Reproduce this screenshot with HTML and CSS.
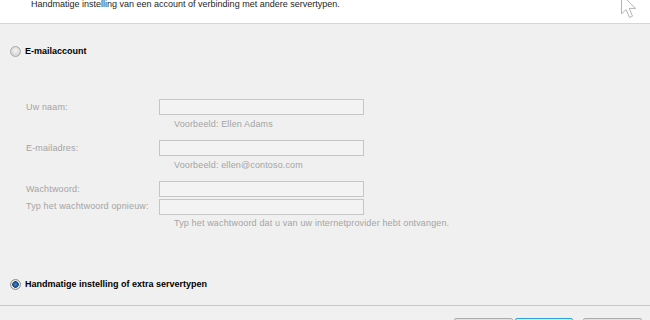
FILE: index.html
```html
<!DOCTYPE html>
<html lang="nl">
<head>
    <meta charset="UTF-8">
    <title>Account toevoegen</title>
    <link rel="stylesheet" href="styles.css">
</head>
<body>
    <div class="header">
        <p class="header-text">Handmatige instelling van een account of verbinding met andere servertypen.</p>
        <svg class="cursor" width="18" height="22" viewBox="0 0 18 22">
            <path d="M1.5 -5.5 L1.5 14 L6 9.5 L9.5 17.5 L12.5 16.2 L9.2 8.4 L15.5 8.4 Z" fill="#ffffff" stroke="#b4b4b4" stroke-width="1"/>
        </svg>
    </div>

    <div class="option first">
        <span class="radio"></span>
        <span class="option-label">E-mailaccount</span>
    </div>

    <div class="form">
        <label class="field-label">Uw naam:</label>
        <span class="field"></span>
        <span></span>
        <span class="hint">Voorbeeld: Ellen Adams</span>

        <label class="field-label">E-mailadres:</label>
        <span class="field"></span>
        <span></span>
        <span class="hint">Voorbeeld: ellen@contoso.com</span>

        <label class="field-label">Wachtwoord:</label>
        <span class="field"></span>
        <label class="field-label">Typ het wachtwoord opnieuw:</label>
        <span class="field tight"></span>
        <span></span>
        <span class="hint wide">Typ het wachtwoord dat u van uw internetprovider hebt ontvangen.</span>
    </div>

    <div class="option second">
        <span class="radio checked"></span>
        <span class="option-label">Handmatige instelling of extra servertypen</span>
    </div>

    <div class="footer">
        <button class="btn" aria-label="Vorige"></button>
        <button class="btn default" aria-label="Volgende"></button>
        <button class="btn cancel" aria-label="Annuleren"></button>
    </div>
</body>
</html>
```

FILE: styles.css
```css
body {
    margin: 0;
    padding: 0;
    background-color: #f0f0f0;
    font-family: "Liberation Sans", Arial, sans-serif;
    font-size: 9px;
    color: #000;
    overflow: hidden;
}
.header {
    position: relative;
    height: 23px;
    background-color: #ffffff;
    border-bottom: 1px solid #d6d6d6;
}
.header-text {
    margin: 0;
    padding: 0 0 0 31px;
    line-height: 8px;
    color: #1e1e1e;
}
.cursor {
    position: absolute;
    right: 12px;
    top: 0;
}
.option {
    display: flex;
    align-items: center;
    height: 11px;
    padding-left: 10px;
}
.option.first {
    margin-top: 22px;
}
.option.second {
    margin-top: 50px;
}
.radio {
    width: 9px;
    height: 9px;
    border-radius: 50%;
    border: 1px solid #a9a9a9;
    background: radial-gradient(circle at 50% 40%, #f4f4f4 0, #d6d6d6 70%, #c8c8c8 100%);
}
.radio.checked {
    border-color: #8e8e8e;
    background: radial-gradient(circle, #2f8ee0 0, #1b5fa8 2px, #24406a 3px, #e8e8e8 3.6px, #cfcfcf 100%);
}
.option-label {
    margin-left: 4px;
    font-weight: bold;
    line-height: 11px;
}
.form {
    display: grid;
    grid-template-columns: 133px 205px;
    align-items: center;
    margin-top: 42px;
    padding-left: 26px;
}
.field-label {
    color: #a4a4a4;
    line-height: 16px;
    letter-spacing: 0.15px;
    white-space: nowrap;
}
.field {
    height: 14px;
    border: 1px solid #c6c6c6;
    background-color: #f3f3f3;
}
.field.tight {
    margin-top: 2px;
}
.hint {
    margin-top: 3px;
    margin-bottom: 10px;
    padding-left: 15px;
    line-height: 12px;
    color: #a4a4a4;
    white-space: nowrap;
    letter-spacing: 0.15px;
}
.hint.wide {
    margin-top: 2px;
    margin-bottom: 0;
}
.footer {
    display: flex;
    justify-content: flex-end;
    margin-top: 15px;
    padding: 12px 8px 0 0;
    border-top: 1px solid #c8c8c8;
}
.btn {
    width: 59px;
    height: 22px;
    margin-left: 2px;
    border: 1px solid #adadad;
    border-radius: 2px;
    background-color: #e1e1e1;
    padding: 0;
}
.btn.default {
    width: 58px;
    border-color: #2f9fe0;
    background-color: #e5f1fb;
}
.btn.cancel {
    margin-left: 10px;
}
```
